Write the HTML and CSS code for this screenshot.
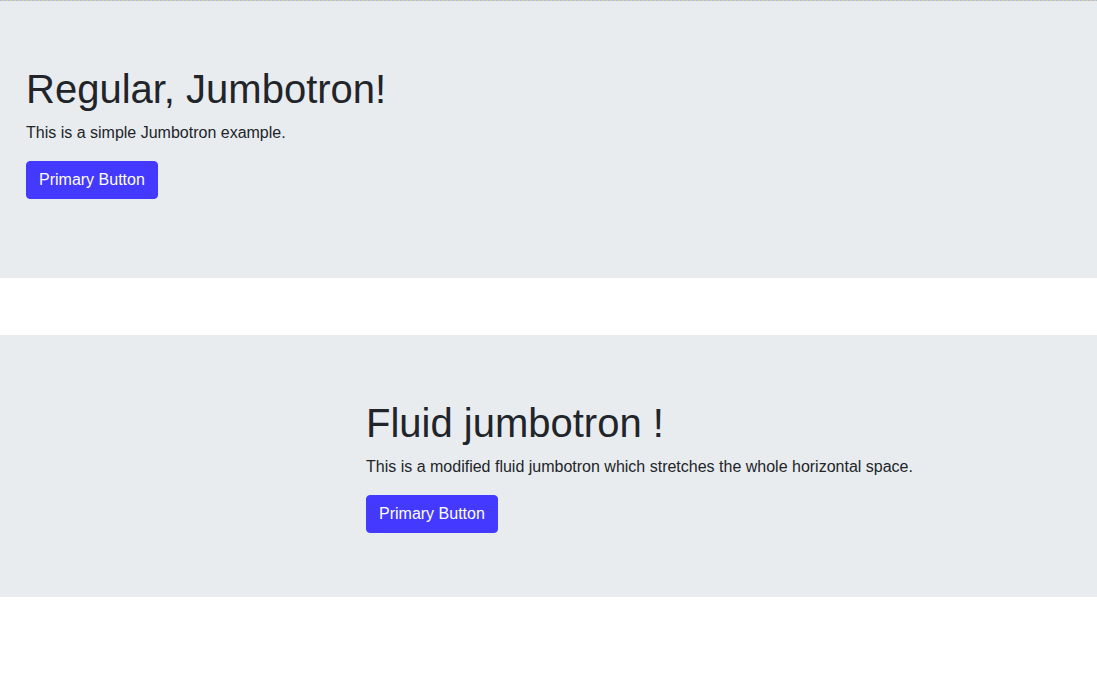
FILE: index.html
```html
<!DOCTYPE html>
<html lang="en">
<head>
<meta charset="utf-8">
<title>Jumbotron</title>
<link rel="stylesheet" href="styles.css">
</head>
<body>
<div class="topline"></div>
<section class="jumbotron jumbotron-regular">
  <h1 class="title">Regular, Jumbotron!</h1>
  <p class="lead">This is a simple Jumbotron example.</p>
  <p class="actions"><a class="btn" href="#">Primary Button</a></p>
</section>
<section class="jumbotron jumbotron-fluid">
  <div class="fluid-container">
    <h1 class="title">Fluid jumbotron !</h1>
    <p class="lead">This is a modified fluid jumbotron which stretches the whole horizontal space.</p>
    <a class="btn" href="#">Primary Button</a>
  </div>
</section>
</body>
</html>
```

FILE: styles.css
```css
* { box-sizing: border-box; }
html, body { margin: 0; padding: 0; }
body {
  font-family: "Liberation Sans", Arial, sans-serif;
  font-size: 16px;
  line-height: 1.5;
  color: #212529;
  background: #ffffff;
}
.topline {
  height: 1px;
  background: repeating-linear-gradient(90deg, #a9c0dc 0 2px, #d9cda6 2px 4px);
}
.jumbotron {
  background: #e9ecef;
  padding: 64px 26px;
}
.jumbotron-regular {
  padding-bottom: 63px;
  margin-bottom: 57px;
}
.jumbotron-fluid {
  padding-left: 366px;
}
.title {
  margin: 0 0 8px 0;
  font-size: 40px;
  font-weight: 400;
  line-height: 1.2;
}
.lead {
  margin: 0 0 16px 0;
}
.actions {
  margin: 0 0 16px 0;
}
.btn {
  display: inline-block;
  padding: 6px 12px;
  font-size: 16px;
  line-height: 24px;
  color: #ffffff;
  background: #4339ff;
  border: 1px solid #4339ff;
  border-radius: 4px;
  text-decoration: none;
  vertical-align: top;
}
```
